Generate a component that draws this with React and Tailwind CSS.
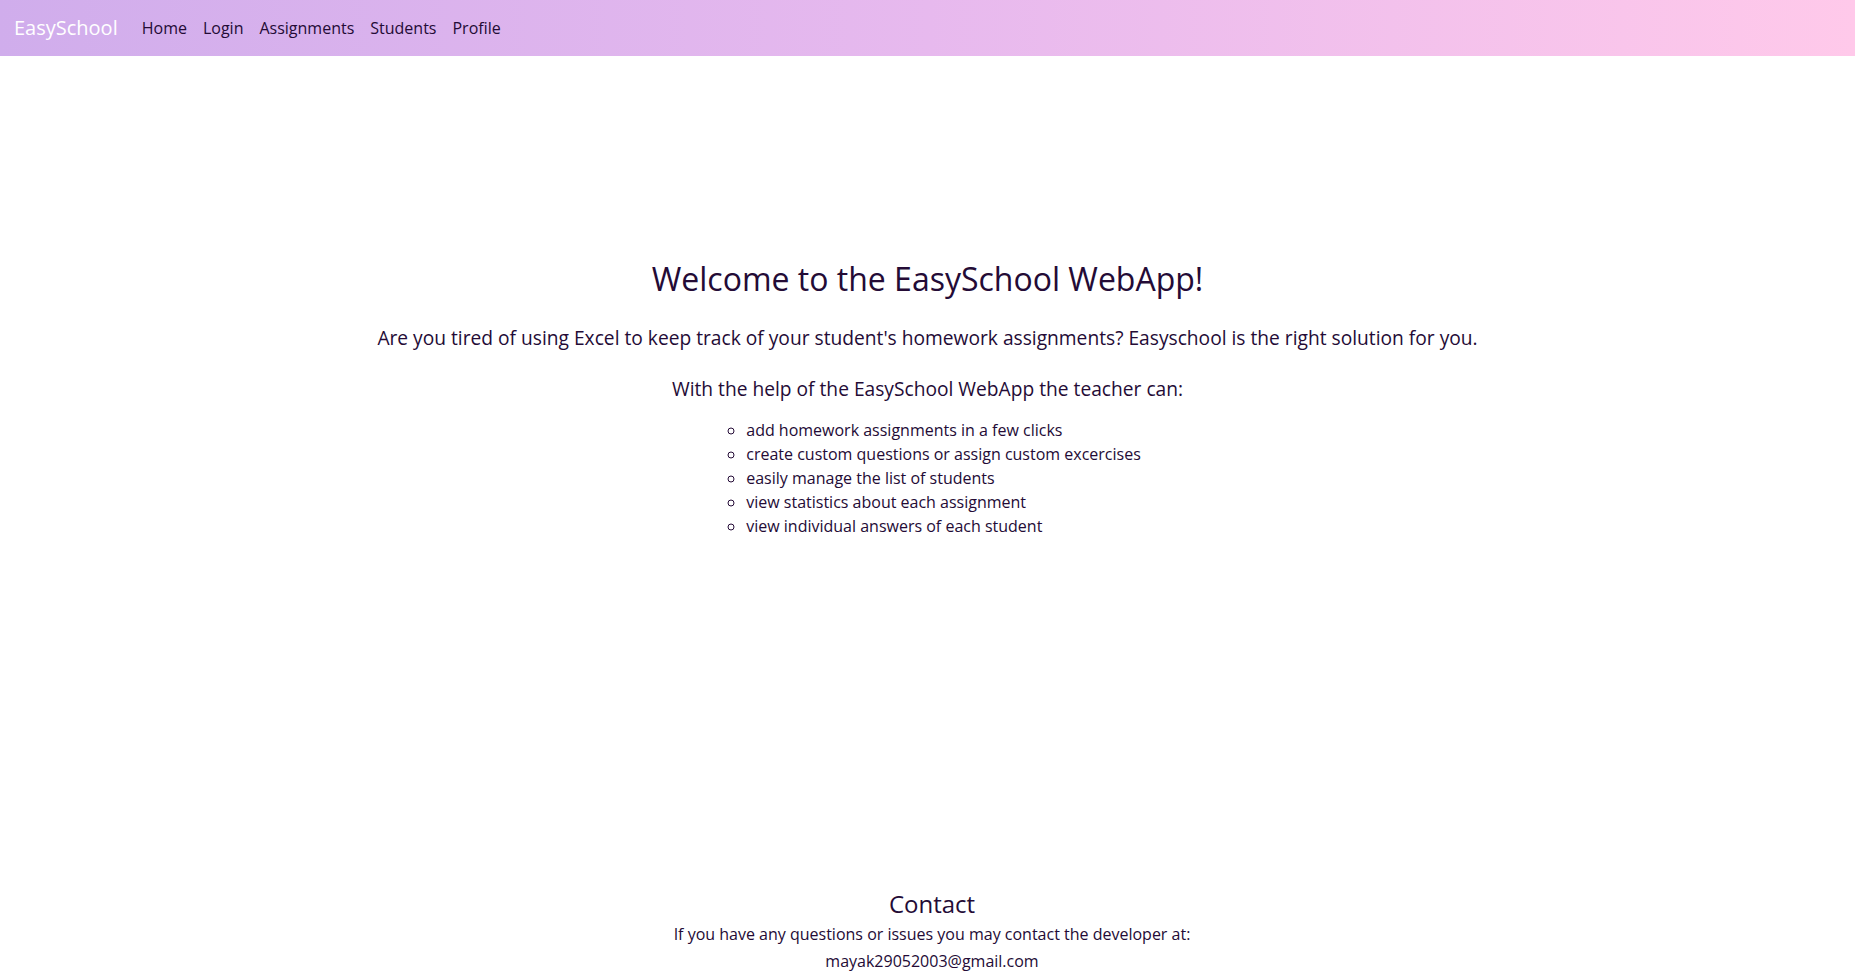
import React from "react";

const features = [
  "add homework assignments in a few clicks",
  "create custom questions or assign custom excercises",
  "easily manage the list of students",
  "view statistics about each assignment",
  "view individual answers of each student",
];

const links = ["Home", "Login", "Assignments", "Students", "Profile"];

export default function App() {
  return (
    <div
      className="flex h-screen flex-col bg-white text-[#240b36]"
      style={{ fontFamily: '"Open Sans", "Noto Sans", sans-serif' }}
    >
      {/* Navbar */}
      <nav className="flex h-14 shrink-0 items-center bg-gradient-to-r from-[#d0adec] via-[#e7b9ee] to-[#ffc9ea] px-[14px]">
        <a className="mr-[24px] text-[20px] leading-[30px] text-white">EasySchool</a>
        <ul className="flex items-center gap-[16px] text-[16px] leading-6">
          {links.map((l) => (
            <li key={l}>
              <a className="text-[#240b36]">{l}</a>
            </li>
          ))}
        </ul>
      </nav>

      {/* Main */}
      <main className="flex flex-1 flex-col items-center pt-[204px] text-center">
        <h1 className="mb-[25px] text-[32px] leading-[38px]">
          Welcome to the EasySchool WebApp!
        </h1>
        <p className="mb-[21px] text-[19.2px] leading-[30px]">
          Are you tired of using Excel to keep track of your student's homework
          assignments? Easyschool is the right solution for you.
        </p>
        <p className="mb-[14px] text-[19.2px] leading-[30px]">
          With the help of the EasySchool WebApp the teacher can:
        </p>
        <ul className="list-[circle] pl-8 text-left text-[16px] leading-6">
          {features.map((f) => (
            <li key={f}>{f}</li>
          ))}
        </ul>
      </main>

      {/* Footer */}
      <footer className="flex shrink-0 flex-col items-center pb-[2px] pl-[9px] text-center">
        <h4 className="mb-[2px] text-[24px] leading-[29px]">Contact</h4>
        <p className="text-[16px] leading-[28px]">
          If you have any questions or issues you may contact the developer at:
        </p>
        <p className="text-[16px] leading-[27px]">mayak29052003@gmail.com</p>
      </footer>
    </div>
  );
}
